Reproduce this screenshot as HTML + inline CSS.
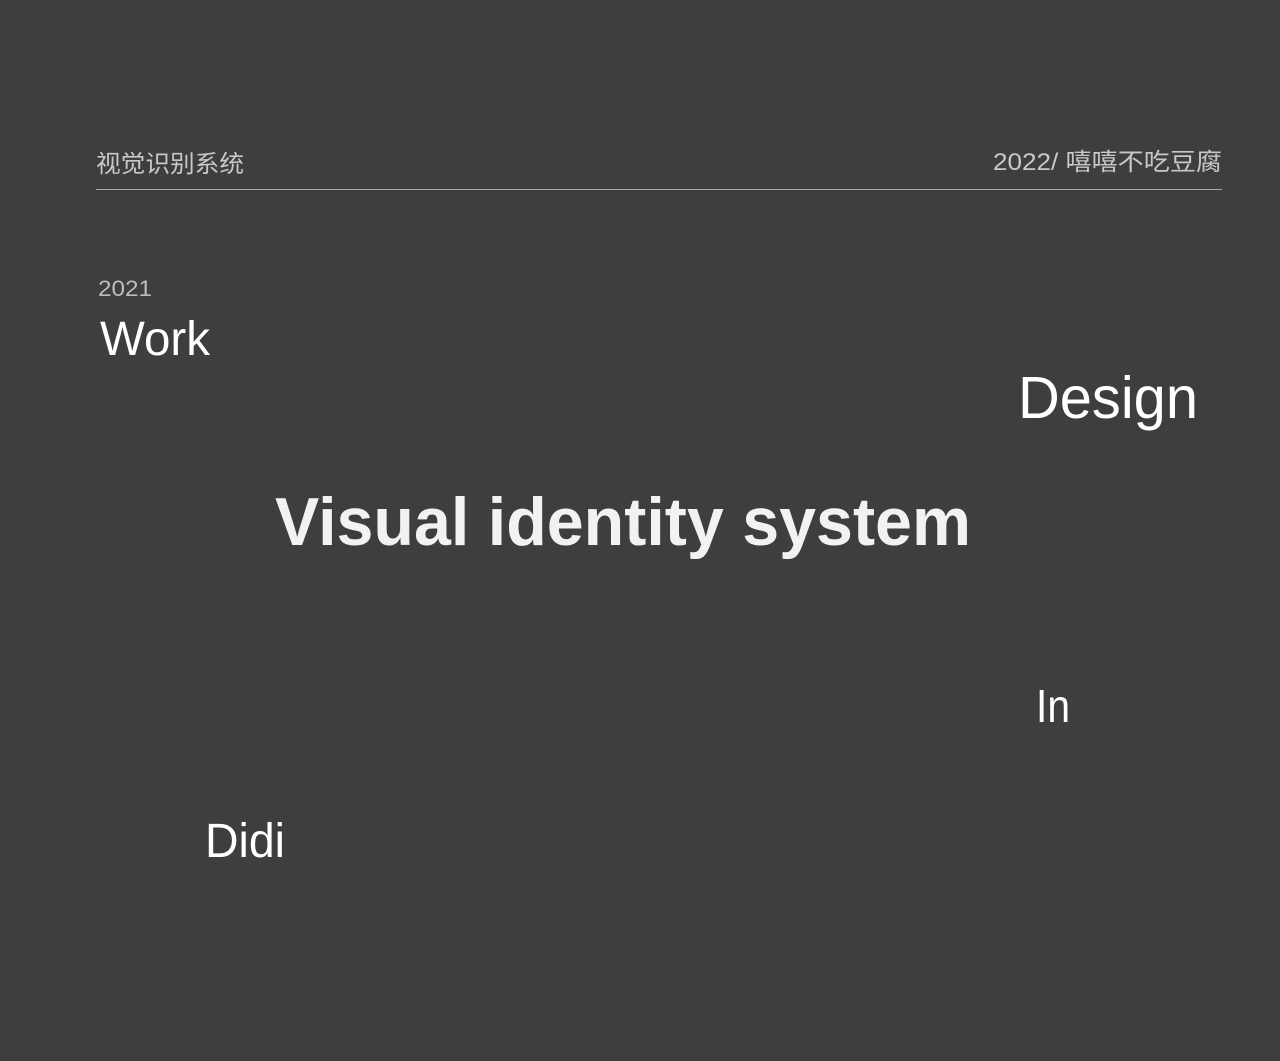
<!DOCTYPE html>
<html><head><meta charset="utf-8"><style>
html,body{margin:0;padding:0;background:#3e3e3e;}
svg{display:block}
</style></head><body>
<svg width="1280" height="1061" xmlns="http://www.w3.org/2000/svg">
<rect width="1280" height="1061" fill="#3e3e3e"/>
<g font-family="'Liberation Sans','Noto Sans CJK SC',sans-serif">
<text x="96" y="172" font-size="24" fill="#c8c8c8" textLength="148" lengthAdjust="spacingAndGlyphs">视觉识别系统</text>
<text x="993" y="170" font-size="24" fill="#c8c8c8" textLength="229" lengthAdjust="spacingAndGlyphs">2022/ 嘻嘻不吃豆腐</text>
<rect x="96" y="189" width="1126" height="1" fill="#a8a8a8"/>
<text x="98" y="296" font-size="22" fill="#bdbdbd" textLength="54" lengthAdjust="spacingAndGlyphs">2021</text>
<text x="100" y="355" font-size="48" fill="#fff" textLength="110" lengthAdjust="spacingAndGlyphs">Work</text>
<text x="1018" y="418" font-size="59" fill="#fff" textLength="180" lengthAdjust="spacingAndGlyphs">Design</text>
<text x="275" y="545" font-size="68" font-weight="bold" fill="#f2f2f2" textLength="696" lengthAdjust="spacingAndGlyphs">Visual identity system</text>
<text x="1036" y="722" font-size="46" fill="#fff" textLength="34" lengthAdjust="spacingAndGlyphs">In</text>
<text x="205" y="857" font-size="48" fill="#fff" textLength="80" lengthAdjust="spacingAndGlyphs">Didi</text>
</g>
</svg>
</body></html>
